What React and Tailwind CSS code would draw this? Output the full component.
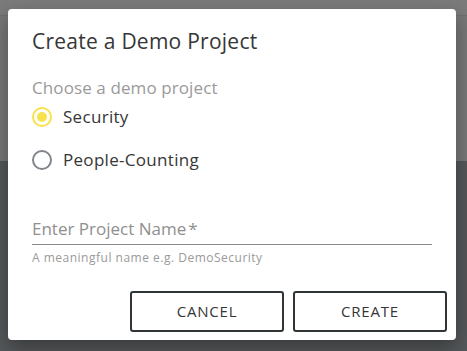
import React from "react";

export default function App() {
  const font = { fontFamily: '"Open Sans", "Noto Sans", sans-serif' };
  return (
    <div className="relative w-[467px] h-[351px] overflow-hidden bg-[#787878]" style={font}>
      {/* backdrop */}
      <div className="absolute inset-x-0 top-0 h-[16px] bg-[#7b7b7b] border-b border-[#6f6f6f]" />
      <div className="absolute inset-x-0 top-[161px] bottom-0 bg-[#55585a]" />
      {/* dialog */}
      <div className="absolute left-[8px] top-[9px] w-[448px] h-[331px] bg-white rounded-[4px] shadow-[0_8px_20px_rgba(0,0,0,0.35)] flex flex-col px-[24px] pt-[18px]">
        <h2 className="text-[21px] leading-[28px] text-[#363636] tracking-[0.25px]">Create a Demo Project</h2>
        <div className="mt-[23px] text-[17px] leading-[20px] text-[#9a9a9a] tracking-[0.1px]">Choose a demo project</div>
        <div className="mt-[9px] flex flex-col gap-[23px]">
          <label className="flex items-center gap-[11px] h-[20px]">
            <span className="w-[20px] h-[20px] rounded-full border-2 border-[#f7e24b] flex items-center justify-center">
              <span className="w-[10px] h-[10px] rounded-full bg-[#f7e24b]" />
            </span>
            <span className="text-[17px] text-[#363636] tracking-[0.3px]">Security</span>
          </label>
          <label className="flex items-center gap-[11px] h-[20px]">
            <span className="w-[20px] h-[20px] rounded-full border-2 border-[#80868b]" />
            <span className="text-[17px] text-[#363636] tracking-[0.3px]">People-Counting</span>
          </label>
        </div>
        <div className="mt-[49px] w-[400px] border-b border-[#8a8a8a] pb-[5px] text-[17px] leading-[20px] text-[#8f8f8f]">
          Enter Project Name<span className="ml-[2px]">*</span>
        </div>
        <div className="mt-[6px] text-[12px] leading-[14px] text-[#9a9a9a] tracking-[0.5px]">A meaningful name e.g. DemoSecurity</div>
        <div className="mt-auto mb-[8px] -mr-[15px] flex justify-end gap-[9px]">
          <button className="w-[154px] h-[41px] border-2 border-[#2f3537] rounded-[3px] text-[15px] text-[#363636] tracking-[0.8px]">CANCEL</button>
          <button className="w-[154px] h-[41px] border-2 border-[#2f3537] rounded-[3px] text-[15px] text-[#363636] tracking-[0.8px]">CREATE</button>
        </div>
      </div>
    </div>
  );
}
